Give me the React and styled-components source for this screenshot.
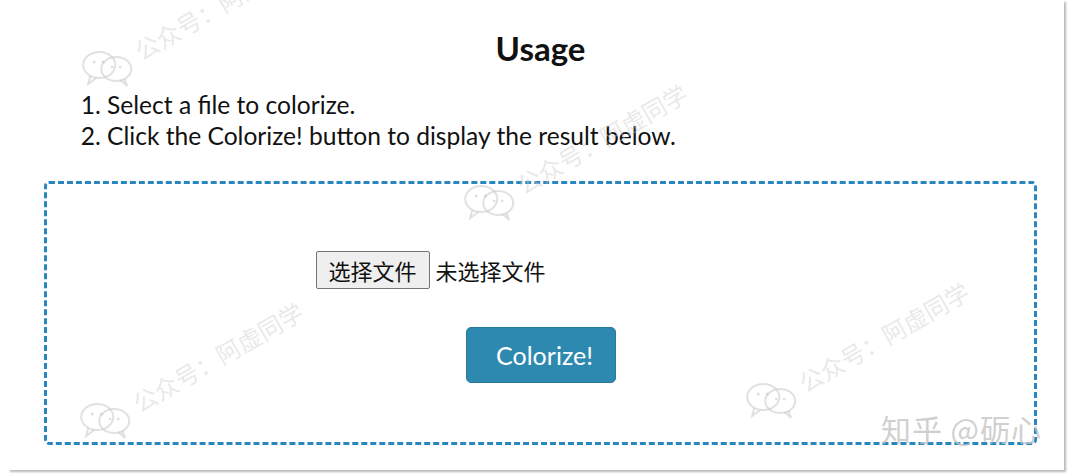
import styled, { createGlobalStyle } from "styled-components";

const GlobalStyle = createGlobalStyle`
  html, body {
    margin: 0;
    padding: 0;
    background: #fff;
  }
  body {
    font-family: Lato, "Noto Sans CJK SC", sans-serif;
    color: #111;
  }
`;

const Page = styled.div`
  width: 1070px;
  height: 476px;
  overflow: hidden;
  position: relative;
`;

const Card = styled.div`
  margin: 0 8px;
  width: 1056px;
  height: 470px;
  box-sizing: border-box;
  padding: 28px 27px 0 36px;
  background: #fff;
  box-shadow: 2px 2px 2px rgba(0, 0, 0, 0.28);
`;

const Title = styled.h2`
  margin: 0;
  text-align: center;
  font-size: 33px;
  font-weight: 700;
  line-height: 40px;
`;

const Steps = styled.ol`
  margin: 21px 0 0 0;
  padding-left: 63px;
  font-size: 24.6px;
  line-height: 31px;
`;

const DropZone = styled.div`
  margin-top: 30px;
  height: 264px;
  border: 3px dashed #2a86c0;
  border-radius: 5px;
  box-sizing: border-box;
  display: flex;
  flex-direction: column;
  align-items: center;
  padding-top: 67px;
`;

const FilePicker = styled.label`
  width: 450px;
  display: flex;
  align-items: center;
  gap: 6px;
  font-size: 22px;
  font-family: "Noto Sans CJK SC", sans-serif;
  cursor: pointer;

  input {
    display: none;
  }
`;

const PickButton = styled.span`
  display: inline-flex;
  align-items: center;
  justify-content: center;
  width: 114px;
  height: 38px;
  box-sizing: border-box;
  background: #efefef;
  border: 1px solid #767676;
  border-radius: 2px;
  color: #111;
`;

const PickStatus = styled.span`
  color: #111;
`;

const ColorizeButton = styled.button`
  margin-top: 38px;
  width: 150px;
  height: 56px;
  background: #2e89b0;
  border: 1px solid #287a9c;
  border-radius: 5px;
  color: #fff;
  font-family: Lato, sans-serif;
  font-size: 25px;
  padding: 0 0 0 8px;
  cursor: pointer;
`;

const Watermark = styled.div`
  position: absolute;
  left: ${(p) => p.x}px;
  top: ${(p) => p.y}px;
  display: flex;
  align-items: center;
  gap: 4px;
  transform: rotate(-30deg);
  transform-origin: left center;
  font-family: "Noto Sans CJK SC", sans-serif;
  font-size: 24px;
  color: rgba(205, 205, 205, 0.45);
  white-space: nowrap;
  pointer-events: none;
`;

const Signature = styled.div`
  position: absolute;
  right: 28px;
  bottom: 26px;
  font-family: "Noto Sans CJK SC", sans-serif;
  font-size: 30px;
  color: rgba(195, 195, 195, 0.8);
  letter-spacing: 1px;
  pointer-events: none;
`;

const marks = [
  { x: 84, y: 62 },
  { x: 466, y: 196 },
  { x: 82, y: 414 },
  { x: 748, y: 394 },
];

function ChatBubbles() {
  return (
    <svg width="56" height="40" viewBox="0 0 56 40" style={{ transform: "rotate(30deg)" }}>
      <g fill="none" stroke="rgba(200,200,200,0.55)" strokeWidth="2">
        <ellipse cx="19" cy="17" rx="16" ry="13" />
        <path d="M10 28 L8 36 L16 30" />
        <ellipse cx="36" cy="21" rx="15" ry="12" />
        <path d="M44 31 L47 38 L40 32" />
      </g>
      <g fill="rgba(200,200,200,0.6)">
        <circle cx="14" cy="14" r="1.5" />
        <circle cx="23" cy="14" r="1.5" />
        <circle cx="32" cy="19" r="1.3" />
        <circle cx="40" cy="19" r="1.3" />
      </g>
    </svg>
  );
}

export default function App() {
  return (
    <Page>
      <GlobalStyle />
      <Card>
        <Title>Usage</Title>
        <Steps>
          <li>Select a file to colorize.</li>
          <li>Click the Colorize! button to display the result below.</li>
        </Steps>
        <DropZone>
          <FilePicker>
            <input type="file" />
            <PickButton>选择文件</PickButton>
            <PickStatus>未选择文件</PickStatus>
          </FilePicker>
          <ColorizeButton>Colorize!</ColorizeButton>
        </DropZone>
      </Card>
      {marks.map((m, i) => (
        <Watermark key={i} x={m.x} y={m.y}>
          <ChatBubbles />
          <span>公众号：阿虚同学</span>
        </Watermark>
      ))}
      <Signature>知乎 @砺心</Signature>
    </Page>
  );
}
